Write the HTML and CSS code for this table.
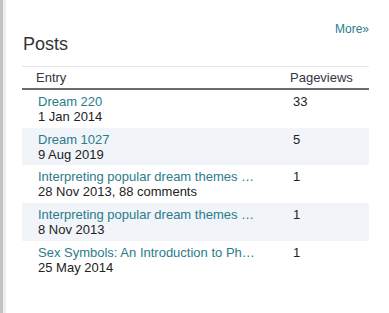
FILE: index.html
```html
<!DOCTYPE html>
<html>
<head>
<meta charset="utf-8">
<link rel="stylesheet" href="styles.css">
</head>
<body>
<div class="frame">
  <div class="inner">
    <section class="widget">
      <div class="more-row"><a class="more" href="#">More»</a></div>
      <h2 class="title">Posts</h2>
      <div class="table">
        <div class="row head">
          <div class="c1">Entry</div>
          <div class="c2">Pageviews</div>
        </div>
        <div class="row">
          <div class="c1"><a class="link" href="#">Dream 220</a><div class="meta">1 Jan 2014</div></div>
          <div class="c2">33</div>
        </div>
        <div class="row alt">
          <div class="c1"><a class="link" href="#">Dream 1027</a><div class="meta">9 Aug 2019</div></div>
          <div class="c2">5</div>
        </div>
        <div class="row">
          <div class="c1"><a class="link" href="#">Interpreting popular dream themes …</a><div class="meta">28 Nov 2013, 88 comments</div></div>
          <div class="c2">1</div>
        </div>
        <div class="row alt">
          <div class="c1"><a class="link" href="#">Interpreting popular dream themes …</a><div class="meta">8 Nov 2013</div></div>
          <div class="c2">1</div>
        </div>
        <div class="row">
          <div class="c1"><a class="link" href="#">Sex Symbols: An Introduction to Ph…</a><div class="meta">25 May 2014</div></div>
          <div class="c2">1</div>
        </div>
      </div>
    </section>
  </div>
</div>
</body>
</html>
```
FILE: styles.css
```css
html, body {
  margin: 0;
  padding: 0;
  background: #fff;
}
body {
  font-family: "Liberation Sans", Arial, sans-serif;
  color: #222;
}
.frame {
  height: 313px;
  border-left: 3px solid #c2c2c2;
  box-sizing: border-box;
}
.inner {
  height: 100%;
  border-left: 3px solid #efefef;
  box-sizing: border-box;
}
.widget {
  margin-left: 16px;
  width: 347px;
  padding-top: 23px;
}
.more-row {
  text-align: right;
  font-size: 12px;
  line-height: 12px;
  padding-right: 0;
}
.more {
  color: #2b7b8b;
  text-decoration: none;
}
.title {
  margin: -1px 0 12px 1px;
  font-size: 18px;
  line-height: 20px;
  font-weight: normal;
  color: #333;
}
.table {
  border-top: 1px solid #e6e6e6;
}
.row {
  display: grid;
  grid-template-columns: 255px 92px;
  font-size: 13px;
  line-height: 15px;
  padding: 4px 0 3.7px;
}
.row.head {
  padding: 3px 0 3px;
  border-bottom: 2px solid #6b6b6b;
  color: #353545;
}
.row.alt {
  background: #f1f4f9;
}
.c1 {
  padding-left: 16px;
  white-space: nowrap;
  overflow: hidden;
}
.head .c1 {
  padding-left: 14px;
}
.c2 {
  padding-left: 16px;
}
.head .c2 {
  padding-left: 13px;
}
.link {
  display: block;
  color: #2b7b8b;
  text-decoration: none;
}
.meta {
  color: #222;
}
```
